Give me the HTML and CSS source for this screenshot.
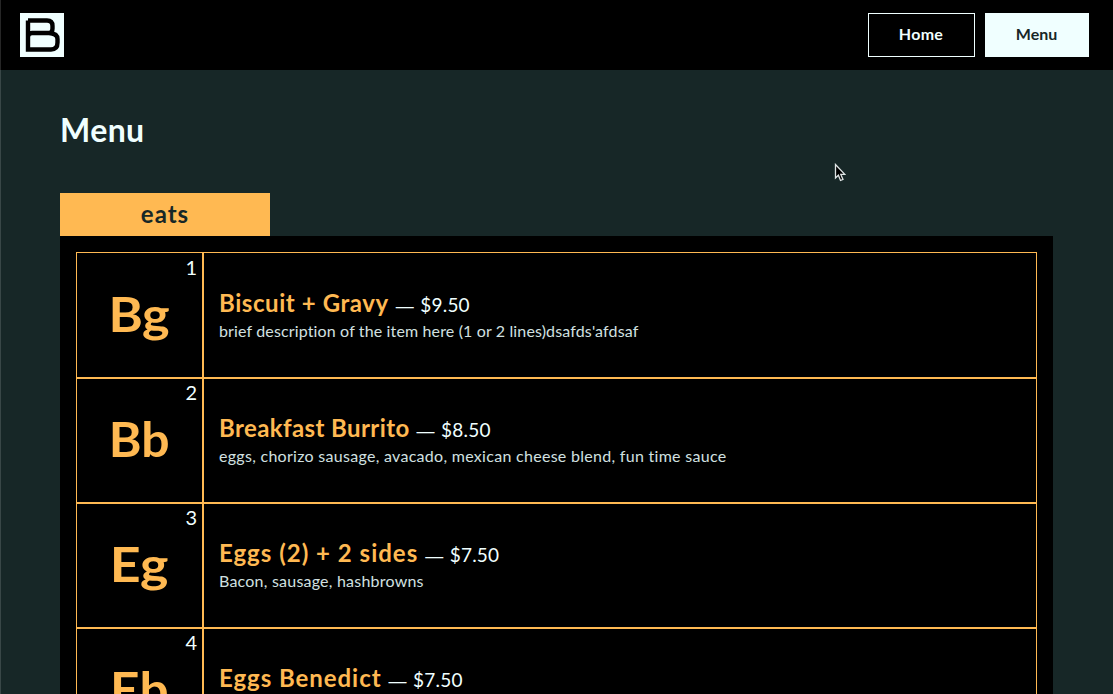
FILE: index.html
```html
<!DOCTYPE html>
<html lang="en">
<head>
<meta charset="utf-8">
<title>Menu</title>
<link rel="stylesheet" href="styles.css">
</head>
<body>
<header class="topbar">
  <svg class="logo" viewBox="0 0 44 44" aria-label="B"><rect width="44" height="44" fill="#f0ffff"/><path d="M8 7.5H27Q32.5 7.5 32.5 13V15.5Q32.5 20 29 20H12Q8 20 8 24M29 20Q37.5 20.5 37.5 26V29.5Q37.5 36.5 31 36.5H8V7.5" fill="none" stroke="#000" stroke-width="4.4"/></svg>
  <nav class="nav"><a class="nav-link nav-home">Home</a><a class="nav-link nav-active">Menu</a></nav>
</header>
<main class="page">
  <h1 class="title">Menu</h1>
  <h2 class="tab">eats</h2>
  <section class="panel">
    <article class="item">
      <div class="tile"><span class="number">1</span><span class="symbol symbol-bg">Bg</span></div>
      <div class="details"><p class="heading"><span class="name biscuit">Biscuit + Gravy</span><span class="dash">—</span><span class="price">$9.50</span></p><p class="desc desc-biscuit">brief description of the item here (1 or 2 lines)dsafds'afdsaf</p></div>
    </article>
    <article class="item">
      <div class="tile"><span class="number">2</span><span class="symbol symbol-bb">Bb</span></div>
      <div class="details"><p class="heading"><span class="name burrito">Breakfast Burrito</span><span class="dash">—</span><span class="price">$8.50</span></p><p class="desc desc-burrito">eggs, chorizo sausage, avacado, mexican cheese blend, fun time sauce</p></div>
    </article>
    <article class="item">
      <div class="tile"><span class="number">3</span><span class="symbol symbol-eg">Eg</span></div>
      <div class="details"><p class="heading"><span class="name eggs">Eggs (2) + 2 sides</span><span class="dash">—</span><span class="price">$7.50</span></p><p class="desc desc-eggs">Bacon, sausage, hashbrowns</p></div>
    </article>
    <article class="item">
      <div class="tile"><span class="number">4</span><span class="symbol symbol-eb">Eb</span></div>
      <div class="details"><p class="heading"><span class="name benedict">Eggs Benedict</span><span class="dash">—</span><span class="price">$7.50</span></p></div>
    </article>
  </section>
</main>
<svg class="cursor" viewBox="0 0 12 19"><path d="M1.5 1.5V15L4.4 12.2L6.5 17.5L9 16.4L6.8 11.4H10.8Z" fill="#000" stroke="#dfe5e5" stroke-width="1.3"/></svg>
</body>
</html>
```
FILE: styles.css
```css
* { box-sizing: border-box; }
html { overflow: hidden; }
body { margin: 0; height: 694px; overflow: hidden; position: relative; background: #172727; color: #f0ffff; font-family: Lato, sans-serif; }
body::before { content: ""; position: absolute; left: 0; top: 0; width: 1px; height: 100%; background: rgba(255,255,255,.15); }
h1, h2, p { margin: 0; }
.topbar { height: 70px; padding: 0 24px 0 20px; display: flex; align-items: center; justify-content: space-between; background: #000; }
.logo { width: 44px; height: 44px; display: block; }
.nav { display: flex; gap: 10px; }
.nav-link { height: 44px; padding: 0 1px 3px 0; display: flex; align-items: center; justify-content: center; border: 1px solid #f0ffff; font-size: 16px; font-weight: 700; letter-spacing: .3px; }
.nav-home { width: 107px; }
.nav-active { width: 104px; background: #f0ffff; color: #172727; letter-spacing: 0; }
.page { padding: 40px 60px 0; }
.title { font-size: 32px; line-height: 40px; font-weight: 700; letter-spacing: .4px; }
.tab { width: 210px; height: 43px; margin-top: 43px; background: #ffb952; color: #172727; font-size: 24px; line-height: 42px; font-weight: 700; text-align: center; letter-spacing: 1px; }
.panel { background: #000; padding: 16px; }
.item { height: 125px; display: flex; }
.item:first-child { height: 126px; }
.tile { width: 127px; border: 1px solid #ffb952; position: relative; display: flex; align-items: center; justify-content: center; padding-bottom: 3px; }
.number { position: absolute; top: 1px; right: 5px; font-size: 20px; line-height: 24px; }
.item:first-child .number { top: 2px; }
.symbol { font-size: 48px; line-height: 60px; font-weight: 700; color: #ffb952; }
.symbol-bg { transform: scaleX(1.09); }
.symbol-bb { transform: scaleX(1.04); }
.symbol-eg { transform: scaleX(1.12); }
.symbol-eb { transform: scaleX(1.07); }
.details { flex: 1; border: 1px solid #ffb952; padding: 34px 16px 0 15px; }
.item:first-child .details { padding-top: 35px; }
.heading { display: flex; align-items: baseline; height: 31px; line-height: 29px; }
.name { font-size: 24px; font-weight: 700; color: #ffb952; }
.biscuit { letter-spacing: .57px; }
.burrito { letter-spacing: .4px; }
.eggs { letter-spacing: 1px; }
.benedict { letter-spacing: .95px; }
.dash { font: 18px/29px "Liberation Sans", sans-serif; margin: 0 6.5px 0 7px; }
.price { font-size: 19px; letter-spacing: .2px; }
.desc { font-size: 16px; line-height: 23px; color: #d2e0e0; white-space: nowrap; }
.desc-biscuit { letter-spacing: .14px; }
.desc-burrito { letter-spacing: .29px; }
.desc-eggs { letter-spacing: .22px; }
.cursor { position: absolute; left: 834px; top: 163px; width: 12px; height: 19px; }
```
